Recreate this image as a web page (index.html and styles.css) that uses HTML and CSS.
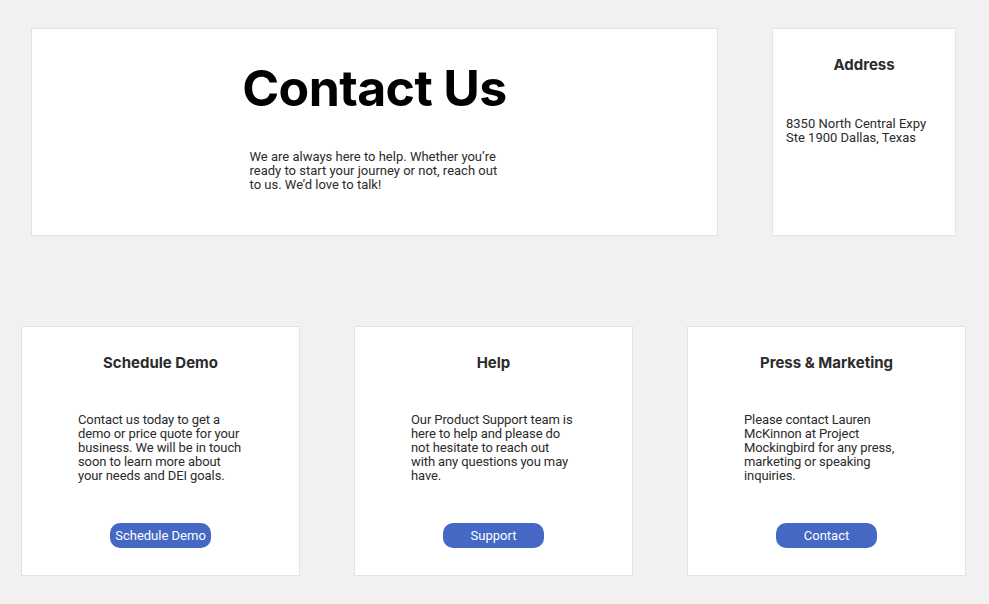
FILE: index.html
```html
<!DOCTYPE html>
<html lang="en">
<head>
<meta charset="utf-8">
<title>Contact Us</title>
<link rel="stylesheet" href="styles.css">
</head>
<body>
<div class="page">
  <div class="row row-top">
    <section class="card card-hero">
      <h1 class="hero-title">Contact Us</h1>
      <p class="hero-text">We are always here to help. Whether you’re ready to start your journey or not, reach out to us. We’d love to talk!</p>
    </section>
    <section class="card card-address">
      <h2 class="card-title">Address</h2>
      <p class="address-text">8350 North Central Expy<br>Ste 1900 Dallas, Texas</p>
    </section>
  </div>
  <div class="row row-bottom">
    <section class="card card-info">
      <h2 class="card-title">Schedule Demo</h2>
      <p class="info-text">Contact us today to get a demo or price quote for your business. We will be in touch soon to learn more about your needs and DEI goals.</p>
      <a class="btn" href="#">Schedule Demo</a>
    </section>
    <section class="card card-info">
      <h2 class="card-title">Help</h2>
      <p class="info-text">Our Product Support team is here to help and please do not hesitate to reach out with any questions you may have.</p>
      <a class="btn" href="#">Support</a>
    </section>
    <section class="card card-info">
      <h2 class="card-title">Press &amp; Marketing</h2>
      <p class="info-text">Please contact Lauren McKinnon at Project Mockingbird for any press, marketing or speaking inquiries.</p>
      <a class="btn" href="#">Contact</a>
    </section>
  </div>
</div>
</body>
</html>
```

FILE: styles.css
```css
* { box-sizing: border-box; }
html, body {
  margin: 0;
  padding: 0;
  background: #f1f1f1;
  font-family: Inter, "Noto Sans", "Liberation Sans", sans-serif;
  color: #2b2b2b;
}
.page {
  padding-top: 28px;
}
.row {
  display: flex;
  gap: 54px;
}
.row-top {
  padding-left: 31px;
}
.row-bottom {
  padding-left: 21px;
  margin-top: 90px;
}
.card {
  background: #fff;
  border: 1px solid #e3e3e3;
}
.card-hero {
  width: 687px;
  height: 208px;
  display: flex;
  flex-direction: column;
  align-items: center;
  padding-top: 29px;
}
.hero-title {
  margin: 0;
  font-size: 50px;
  line-height: 60px;
  font-weight: 700;
  color: #000;
  letter-spacing: -0.6px;
}
.hero-text {
  margin: 32px 0 0;
  width: 250px;
  font-family: Roboto, "Noto Sans", sans-serif;
  font-size: 13px;
  line-height: 14px;
  color: #2b2b2b;
}
.card-address {
  width: 184px;
  height: 208px;
  padding: 26px 13px 0;
}
.card-title {
  margin: 0;
  text-align: center;
  font-size: 15px;
  line-height: 20px;
  font-weight: 700;
  color: #2b2b2b;
}
.address-text {
  margin: 42px 0 0;
  font-family: Roboto, "Noto Sans", sans-serif;
  font-size: 13px;
  line-height: 14px;
}
.card-info {
  width: 279px;
  height: 250px;
  display: flex;
  flex-direction: column;
  align-items: center;
  padding-top: 26px;
}
.info-text {
  align-self: flex-start;
  margin: 40px 0 0 56px;
  width: 165px;
  font-family: Roboto, "Noto Sans", sans-serif;
  font-size: 13px;
  line-height: 14px;
  letter-spacing: -0.1px;
}
.btn {
  margin-top: auto;
  margin-bottom: 27px;
  width: 101px;
  height: 25px;
  border-radius: 10px;
  background: #4468c4;
  color: #fff;
  text-decoration: none;
  font-family: Roboto, "Noto Sans", sans-serif;
  font-size: 13px;
  line-height: 25px;
  text-align: center;
}
```
